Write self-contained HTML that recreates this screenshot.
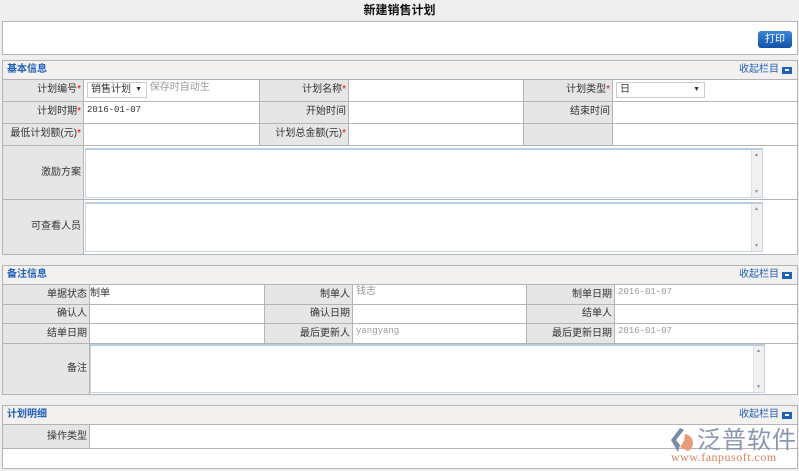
<!DOCTYPE html>
<html><head><meta charset="utf-8"><style>
*{margin:0;padding:0;box-sizing:border-box}
html,body{width:799px;height:471px}
body{background:#efefef;position:relative;overflow:hidden;font-family:"Liberation Sans","Noto Sans CJK SC",sans-serif;font-size:10px;color:#333}
.a{position:absolute;white-space:nowrap}
.box{position:absolute;border:1px solid #b4b4b4;background:#fff}
.hd{position:absolute;background:#f3f1ef;border:1px solid #b4b4b4;height:20px}
.hd b{position:absolute;left:4px;top:2px;color:#1f5fb8;font-size:10px;line-height:14px}
.hd i{position:absolute;right:18px;top:2px;color:#1f5fb8;font-style:normal;font-size:10px;line-height:14px}
.hd s{position:absolute;right:5px;top:6px;width:10px;height:7px;background:#1e63b8;text-decoration:none}
.hd s:after{content:"";position:absolute;left:3px;top:2px;width:4px;height:2px;background:#fff}
.l{position:absolute;background:#e6e6e6;border:1px solid #b4b4b4;text-align:right;padding-right:2px;line-height:20px;color:#333;white-space:nowrap}
.v{position:absolute;background:#fff;border:1px solid #b4b4b4;line-height:18px;padding-left:3px;white-space:nowrap}
.r{color:#e00}
.g{color:#999;font-family:"Liberation Mono","Noto Sans CJK SC",monospace;font-size:9px}
.ta{position:absolute;background:#fff;border:1px solid #c5d5e4;border-top:2px solid #b8cde0}
.sb{position:absolute;right:0;top:0;bottom:0;width:11px;background:#f0f0f0;border-left:1px solid #e0e0e0}
.sb:before{content:"▲";position:absolute;top:2px;left:2px;font-size:5px;color:#888}
.sb:after{content:"▼";position:absolute;bottom:2px;left:2px;font-size:5px;color:#888}
</style></head><body>
<div class="a" style="left:0;top:2px;width:799px;text-align:center;font-weight:bold;font-size:12px;line-height:16px;color:#111">新建销售计划</div>
<div class="box" style="left:2px;top:21px;width:796px;height:34px"></div>
<div class="a" style="left:758px;top:31px;width:34px;height:17px;background:linear-gradient(#3d86d8,#1251a6);border-radius:3px;color:#fff;text-align:center;line-height:17px;font-size:10px">打印</div>

<div class="box" style="left:2px;top:60px;width:796px;height:195px;background:#e6e6e6"></div>
<div class="hd" style="left:2px;top:60px;width:796px"><b>基本信息</b><i>收起栏目</i><s></s></div>
<div class="l" style="left:2px;top:79px;width:82px;height:23px">计划编号<span class="r">*</span></div>
<div class="v" style="left:83px;top:79px;width:177px;height:23px"><span style="display:inline-block;border:1px solid #ccc;width:60px;height:16px;line-height:14px;margin-top:2px;padding-left:3px;position:relative;vertical-align:top">销售计划<span style="position:absolute;right:4px;font-size:7px">▼</span></span> <span style="color:#999;vertical-align:top;line-height:16px">保存时自动生</span></div>
<div class="l" style="left:259px;top:79px;width:90px;height:23px">计划名称<span class="r">*</span></div>
<div class="v" style="left:348px;top:79px;width:176px;height:23px"></div>
<div class="l" style="left:523px;top:79px;width:90px;height:23px">计划类型<span class="r">*</span></div>
<div class="v" style="left:612px;top:79px;width:186px;height:23px"><span style="display:inline-block;border:1px solid #ccc;width:89px;height:16px;line-height:14px;margin-top:2px;padding-left:3px;position:relative;vertical-align:top">日<span style="position:absolute;right:4px;font-size:7px">▼</span></span></div>
<div class="l" style="left:2px;top:101px;width:82px;height:23px">计划时期<span class="r">*</span></div>
<div class="v" style="left:83px;top:101px;width:177px;height:23px;font-family:'Liberation Mono',monospace;font-size:9px;line-height:16px">2016-01-07</div>
<div class="l" style="left:259px;top:101px;width:90px;height:23px">开始时间</div>
<div class="v" style="left:348px;top:101px;width:176px;height:23px"></div>
<div class="l" style="left:523px;top:101px;width:90px;height:23px">结束时间</div>
<div class="v" style="left:612px;top:101px;width:186px;height:23px"></div>
<div class="l" style="left:2px;top:123px;width:82px;height:23px">最低计划额(元)<span class="r">*</span></div>
<div class="v" style="left:83px;top:123px;width:177px;height:23px"></div>
<div class="l" style="left:259px;top:123px;width:90px;height:23px">计划总金额(元)<span class="r">*</span></div>
<div class="v" style="left:348px;top:123px;width:176px;height:23px"></div>
<div class="l" style="left:523px;top:123px;width:90px;height:23px"></div>
<div class="v" style="left:612px;top:123px;width:186px;height:23px"></div>
<div class="l" style="left:2px;top:145px;width:82px;height:55px;line-height:53px">激励方案</div>
<div class="v" style="left:83px;top:145px;width:715px;height:55px"></div>
<div class="ta" style="left:85px;top:148px;width:678px;height:50px"><div class="sb"></div></div>
<div class="l" style="left:2px;top:199px;width:82px;height:56px;line-height:54px">可查看人员</div>
<div class="v" style="left:83px;top:199px;width:715px;height:56px"></div>
<div class="ta" style="left:85px;top:202px;width:678px;height:50px"><div class="sb"></div></div>

<div class="box" style="left:2px;top:265px;width:796px;height:130px;background:#e6e6e6"></div>
<div class="hd" style="left:2px;top:265px;width:796px"><b>备注信息</b><i>收起栏目</i><s></s></div>
<div class="l" style="left:2px;top:284px;width:88px;height:21px;line-height:19px">单据状态</div>
<div class="v" style="left:89px;top:284px;width:176px;height:21px;padding-left:0">制单</div>
<div class="l" style="left:264px;top:284px;width:89px;height:21px;line-height:19px">制单人</div>
<div class="v" style="left:352px;top:284px;width:175px;height:21px;line-height:14px"><span style="color:#999">钱志</span></div>
<div class="l" style="left:526px;top:284px;width:89px;height:21px;line-height:19px">制单日期</div>
<div class="v" style="left:614px;top:284px;width:184px;height:21px;line-height:14px"><span class="g">2016-01-07</span></div>
<div class="l" style="left:2px;top:304px;width:88px;height:20px;line-height:18px">确认人</div>
<div class="v" style="left:89px;top:304px;width:176px;height:20px"></div>
<div class="l" style="left:264px;top:304px;width:89px;height:20px;line-height:18px">确认日期</div>
<div class="v" style="left:352px;top:304px;width:175px;height:20px"></div>
<div class="l" style="left:526px;top:304px;width:89px;height:20px;line-height:18px">结单人</div>
<div class="v" style="left:614px;top:304px;width:184px;height:20px"></div>
<div class="l" style="left:2px;top:323px;width:88px;height:21px;line-height:19px">结单日期</div>
<div class="v" style="left:89px;top:323px;width:176px;height:21px"></div>
<div class="l" style="left:264px;top:323px;width:89px;height:21px;line-height:19px">最后更新人</div>
<div class="v" style="left:352px;top:323px;width:175px;height:21px;line-height:14px"><span class="g">yangyang</span></div>
<div class="l" style="left:526px;top:323px;width:89px;height:21px;line-height:19px">最后更新日期</div>
<div class="v" style="left:614px;top:323px;width:184px;height:21px;line-height:14px"><span class="g">2016-01-07</span></div>
<div class="l" style="left:2px;top:343px;width:88px;height:52px;line-height:50px">备注</div>
<div class="v" style="left:89px;top:343px;width:709px;height:52px"></div>
<div class="ta" style="left:90px;top:344px;width:675px;height:49px"><div class="sb"></div></div>

<div class="box" style="left:2px;top:405px;width:796px;height:64px"></div>
<div class="hd" style="left:2px;top:405px;width:796px"><b>计划明细</b><i>收起栏目</i><s></s></div>
<div class="l" style="left:2px;top:424px;width:88px;height:25px;line-height:23px">操作类型</div>
<div class="v" style="left:89px;top:424px;width:709px;height:25px"></div>
<div class="v" style="left:2px;top:448px;width:796px;height:21px"></div>

<svg class="a" style="left:668px;top:427px" width="30" height="26" viewBox="0 0 30 26">
<path d="M12 1 L3 13 L10 25 L12 18 L8 13 L16 3Z" fill="#7a8aa5"/>
<path d="M17 7 A9 9 0 0 1 20 24 L12 20 L16 14Z" fill="#e89a7a"/>
</svg>
<div class="a" style="left:697px;top:425px;font-size:24px;color:#8896b0;letter-spacing:1px;font-family:'Noto Sans CJK SC',sans-serif;line-height:26px">泛普软件</div>
<div class="a" style="left:671px;top:450px;font-size:12px;line-height:14px;color:#d98262;font-family:'Liberation Serif',serif;letter-spacing:0.5px">www.fanpusoft.com</div>
</body></html>
